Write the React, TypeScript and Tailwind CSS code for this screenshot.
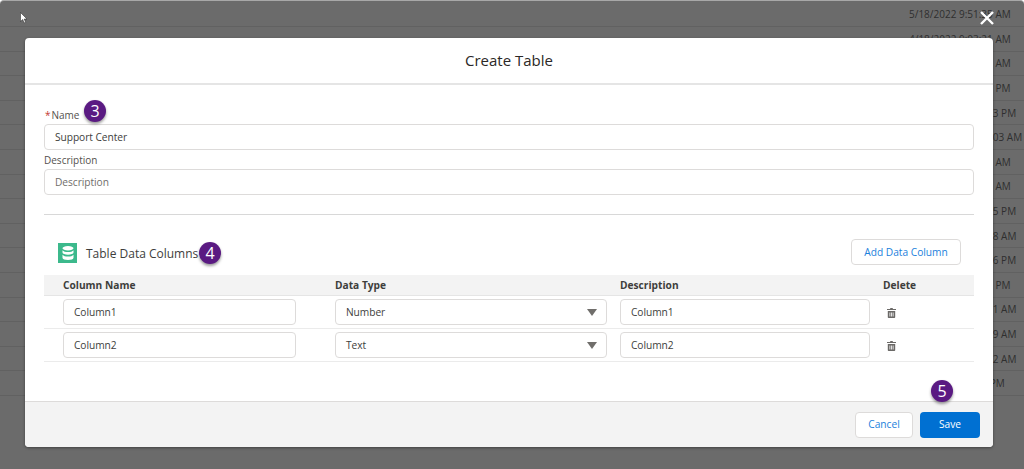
import { ReactNode } from "react";

const rows = [
  "5/18/2022 9:51:35 AM",
  "4/18/2022 9:03:21 AM",
  "4/15/2022 8:44:10 AM",
  "4/12/2022 3:20:47 PM",
  "3/29/2022 12:16:53 PM",
  "12/21/2022 10:37:03 AM",
  "3/16/2022 7:12:28 AM",
  "3/14/2022 9:55:42 AM",
  "3/10/2022 12:41:15 PM",
  "2/28/2022 11:08:38 AM",
  "2/22/2022 12:30:16 PM",
  "2/17/2022 4:26:09 PM",
  "2/11/2022 10:52:11 AM",
  "2/07/2022 11:19:49 AM",
  "1/31/2022 10:03:22 AM",
  "5/9/2022 4:17:30 PM",
];

function Badge({ n, className }: { n: number; className: string }) {
  return (
    <div
      className={`absolute flex h-[22px] w-[22px] items-center justify-center rounded-full bg-[#5a1a82] text-[16px] leading-none text-white shadow-[0_2px_3px_rgba(0,0,0,0.4)] ${className}`}
    >
      {n}
    </div>
  );
}

function Field({ children, className = "" }: { children: ReactNode; className?: string }) {
  return (
    <div
      className={`flex h-[26px] items-center rounded-[4px] border border-[#dddbda] bg-white px-[10px] pt-px text-[10.2px] tracking-[-0.05px] text-[#3e3e3c] ${className}`}
    >
      {children}
    </div>
  );
}

function TrashIcon() {
  return (
    <svg viewBox="0 0 9 10" className="mt-[2px] ml-[4px] h-[10px] w-[9px]" fill="#6b6967">
      <path d="M3.200 0h2.600v1H9v1.100H0V1h3.200z" />
      <path
        d="M.8 3h7.400v6.200a.8.8 0 0 1-.8.8H1.600a.8.8 0 0 1-.8-.8zm1.700 1.400v4h.8v-4zm1.600 0v4h.8v-4zm1.600 0v4h.8v-4z"
        fillRule="evenodd"
      />
    </svg>
  );
}

function DataRow({ name, type }: { name: string; type: string }) {
  return (
    <div className="grid h-[33px] grid-cols-[272px_285px_263px_1fr] items-center border-b border-[#ebebeb] pl-[19px]">
      <Field className="w-[233px]">{name}</Field>
      <Field className="w-[272px] justify-between pr-[9px]">
        <span>{type}</span>
        <span className="h-0 w-0 border-x-[5.5px] border-t-[7px] border-x-transparent border-t-[#706e6b]" />
      </Field>
      <Field className="w-[250px]">{name}</Field>
      <TrashIcon />
    </div>
  );
}

export default function App() {
  return (
    <div className="h-[469px] w-[1024px] overflow-hidden bg-white font-['Open_Sans',sans-serif] text-[#2b2826]">
      <div className="relative h-full w-full overflow-hidden rounded-t-[4px] border-t border-[#a8a8a8] bg-[#6b6b6b]">
        {/* dimmed list behind the modal */}
        <div className="pt-[1.400px]">
          {rows.map((date) => (
            <div
              key={date}
              className="flex h-[24.6px] items-center border-b border-[#616161] pt-px pl-[909px] text-[10px] whitespace-nowrap text-[#2f2f2f]"
            >
              {date}
            </div>
          ))}
        </div>

        <svg viewBox="0 0 8 12" className="absolute top-[11px] left-[20px] h-[12px] w-[8px]">
          <path d="M0.5 0.5v9l2.2-2 1.5 3.4 1.4-.6-1.4-3.3h2.8z" fill="#fff" stroke="#222" strokeWidth="0.5" />
        </svg>

        <svg viewBox="0 0 14 14" className="absolute top-[10px] left-[980px] h-[14px] w-[14px]">
          <path d="M1 1l12 12M13 1L1 13" stroke="#fff" strokeWidth="2.4" />
        </svg>

        {/* modal */}
        <div className="absolute top-[37px] left-[25px] flex h-[409px] w-[968px] flex-col overflow-hidden rounded-[4px] bg-white shadow-[0_1px_3px_rgba(0,0,0,0.4)]">
          <div className="flex h-[47px] shrink-0 items-center justify-center border-b-2 border-[#e5e5e5] text-[15px]">
            Create Table
          </div>

          <div className="flex-1 px-[19px] pt-[24px]">
            <div className="h-[15px] text-[10px] leading-[12px] text-[#54514e]">
              <span className="mr-[1px] ml-[1px] text-[#c23934]">*</span>Name
            </div>
            <Field className="w-full">Support Center</Field>
            <div className="mt-[3px] h-[16px] text-[10px] leading-[14px] text-[#54514e]">Description</div>
            <Field className="w-full text-[#706e6b]">Description</Field>

            <div className="mt-[19px] h-px bg-[#d8d8d8]" />

            <div className="flex h-[60px] items-start justify-between pt-[24px] pr-[13px] pl-[14px]">
              <div className="flex items-center gap-[9px] pt-[4px]">
                <div className="flex h-[20px] w-[19px] items-center justify-center bg-[#3cb98c]">
                  <svg viewBox="0 0 12 14" className="h-[14px] w-[12px]" fill="#fff">
                    <ellipse cx="6" cy="2.200" rx="5.500" ry="2.200" />
                    <path d="M.5 4.200c1 1.300 3 1.800 5.500 1.800s4.500-.5 5.500-1.800v2.300C11.500 7.800 9 8.700 6 8.700S.5 7.800.5 6.500z" />
                    <path d="M.5 8.700c1 1.300 3 1.800 5.500 1.800s4.500-.5 5.500-1.800v3c0 1.300-2.500 2.300-5.500 2.300S.5 13 .5 11.700z" />
                  </svg>
                </div>
                <span className="pt-[2px] text-[12px] text-[#3e3e3c]">Table Data Columns</span>
              </div>
              <div className="flex h-[26px] w-[110px] items-center justify-center rounded-[4px] border border-[#dddbda] pt-[2px] text-[10.2px] text-[#1b7fdc]">
                Add Data Column
              </div>
            </div>

            <div className="grid h-[21px] grid-cols-[272px_285px_263px_1fr] items-center border-b border-[#e5e5e5] bg-[#f3f3f3] pt-px pl-[19px] text-[10.2px] font-bold text-[#3e3e3c]">
              <span>Column Name</span>
              <span>Data Type</span>
              <span>Description</span>
              <span>Delete</span>
            </div>
            <DataRow name="Column1" type="Number" />
            <DataRow name="Column2" type="Text" />
          </div>

          <div className="flex h-[46px] shrink-0 items-center justify-end gap-[7px] border-t border-[#dddbda] bg-[#f3f3f3] pr-[13px]">
            <div className="flex h-[26px] w-[58px] items-center justify-center rounded-[4px] border border-[#dddbda] bg-white pt-px text-[10.2px] text-[#1b7fdc]">
              Cancel
            </div>
            <div className="flex h-[26px] w-[60px] items-center justify-center rounded-[4px] bg-[#0070d2] pt-px text-[10.2px] text-white">
              Save
            </div>
          </div>
        </div>

        <Badge n={3} className="top-[99px] left-[84px]" />
        <Badge n={4} className="top-[241px] left-[199px]" />
        <Badge n={5} className="top-[379px] left-[931px]" />
      </div>
    </div>
  );
}
